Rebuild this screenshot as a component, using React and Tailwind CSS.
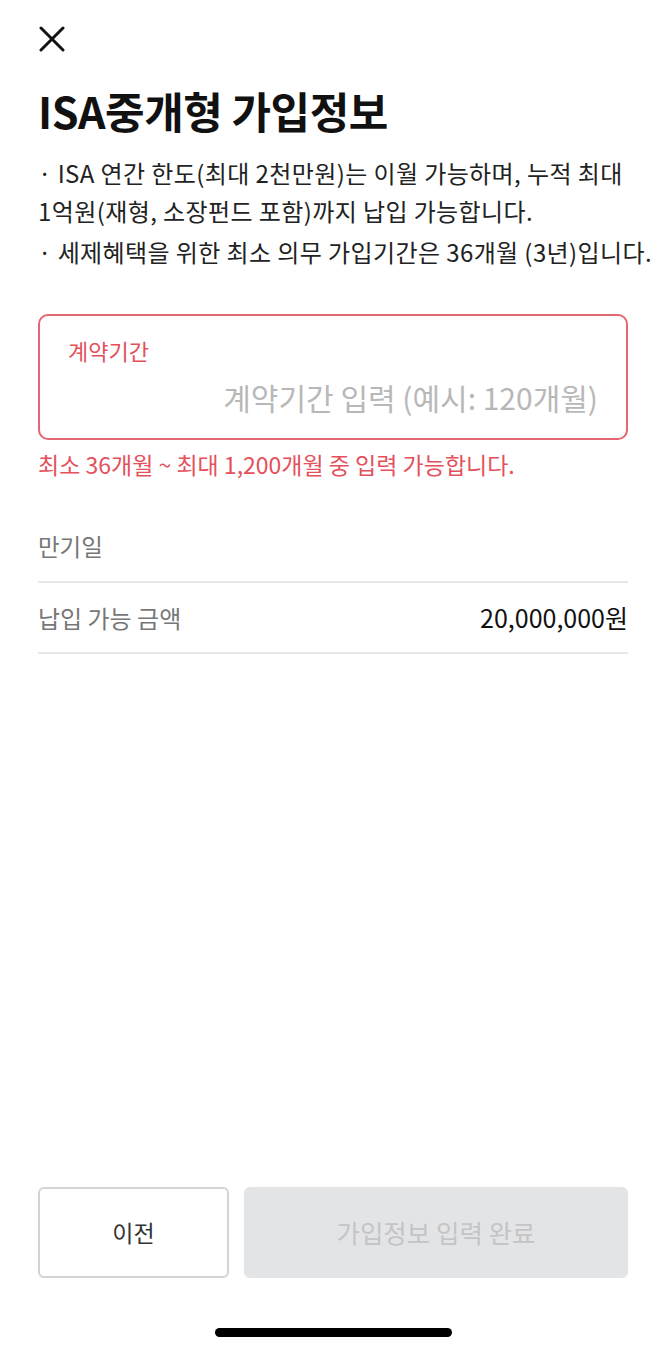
export default function App() {
  return (
    <div
      className="w-[666px] h-[1351px] bg-white flex flex-col px-[38px]"
      style={{ fontFamily: '"Noto Sans CJK KR", "Noto Sans", sans-serif' }}
    >
      {/* close */}
      <div className="pt-[26px]">
        <svg width="26" height="26" viewBox="0 0 26 26" className="ml-[1px]">
          <path d="M2 2 L24 24 M24 2 L2 24" stroke="#111" strokeWidth="3" strokeLinecap="round" />
        </svg>
      </div>

      <h1 className="mt-[33px] text-[43px] leading-[51px] font-bold tracking-[-0.5px] text-[#111] whitespace-nowrap">
        ISA중개형 가입정보
      </h1>

      <div className="mt-[18px] text-[24px] leading-[38px] text-[#222] tracking-[0.4px] whitespace-nowrap">
        <p>
          · ISA 연간 한도(최대 2천만원)는 이월 가능하며, 누적 최대
          <br />
          1억원(재형, 소장펀드 포함)까지 납입 가능합니다.
        </p>
        <p className="mt-[3px]">· 세제혜택을 위한 최소 의무 가입기간은 36개월 (3년)입니다.</p>
      </div>

      {/* input */}
      <div className="mt-[43px] border-2 border-[#e46670] rounded-[10px] pt-[20px] pb-[23px] pl-[28px] pr-[28px]">
        <div className="text-[22px] leading-[28px] text-[#e4505b]">계약기간</div>
        <div className="mt-[15px] text-right text-[30px] leading-[36px] text-[#b8b8b8] whitespace-nowrap">
          계약기간 입력 (예시: 120개월)
        </div>
      </div>
      <p className="mt-[10px] text-[23px] leading-[28px] text-[#e4505b] whitespace-nowrap">
        최소 36개월 ~ 최대 1,200개월 중 입력 가능합니다.
      </p>

      {/* info rows */}
      <div className="mt-[34px]">
        <div className="h-[71px] flex items-center border-b-2 border-[#e8e8e8] text-[23.5px] text-[#777]">
          만기일
        </div>
        <div className="h-[71px] flex items-center justify-between border-b-2 border-[#e8e8e8] text-[24px]">
          <span className="text-[#777]">납입 가능 금액</span>
          <span className="text-[#111] text-[25px]">20,000,000원</span>
        </div>
      </div>

      <div className="flex-1" />

      {/* buttons */}
      <div className="flex gap-[15px]">
        <button className="w-[191px] h-[91px] border-2 border-[#d4d4d4] rounded-[6px] bg-white text-[23px] text-[#333]">
          이전
        </button>
        <button className="flex-1 h-[91px] rounded-[6px] bg-[#e3e4e6] text-[25.5px] text-[#c4c4c6]">
          가입정보 입력 완료
        </button>
      </div>

      <div className="mt-[50px] mb-[14px] flex justify-center">
        <div className="w-[237px] h-[9px] rounded-full bg-black" />
      </div>
    </div>
  );
}
